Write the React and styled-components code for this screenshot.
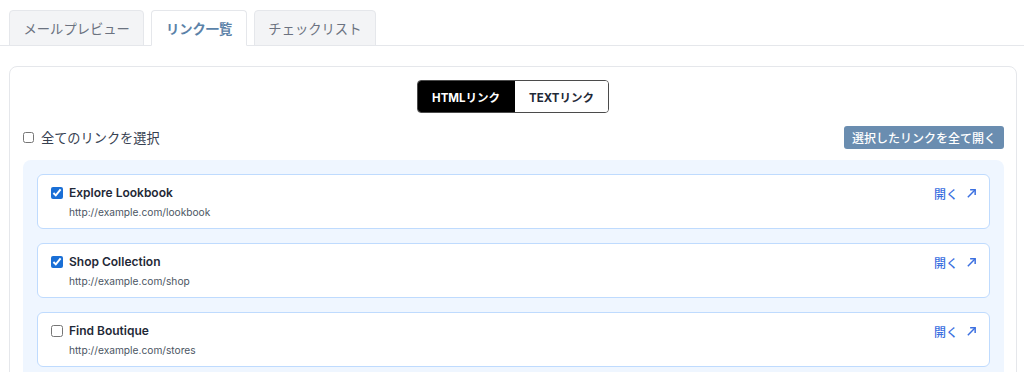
import { useState } from 'react';
import styled, { createGlobalStyle } from 'styled-components';

const GlobalStyle = createGlobalStyle`
	body {
		margin: 0;
		background: #ffffff;
		font-family: Inter, "Noto Sans CJK JP", sans-serif;
		color: #374151;
	}
`;

const Page = styled.div`
	padding: 10px 7px 0 8px;
`;

const TabBar = styled.div`
	display: flex;
	gap: 7px;
	border-bottom: 1px solid #e5e7eb;
	margin: 0 -7px 0 -8px;
	padding: 0 9px;
`;

const Tab = styled.button`
	height: 36px;
	padding: 0 13.5px;
	margin-bottom: -1px;
	font-family: inherit;
	font-size: 13.3px;
	font-weight: ${({ $active }) => ($active ? 700 : 400)};
	color: ${({ $active }) => ($active ? '#5b82a8' : '#6b7280')};
	background: ${({ $active }) => ($active ? '#ffffff' : '#f3f4f6')};
	border: 1px solid #e5e7eb;
	border-bottom-color: ${({ $active }) => ($active ? '#ffffff' : '#e5e7eb')};
	border-radius: 4px 4px 0 0;
	cursor: pointer;
`;

const Panel = styled.div`
	margin-top: 20px;
	margin-left: 1px;
	border: 1px solid #e5e7eb;
	border-radius: 8px;
	padding: 13px 12px 14px 13px;
`;

const ToggleRow = styled.div`
	display: flex;
	justify-content: center;
	padding-right: 1px;
`;

const Toggle = styled.div`
	display: flex;
	border: 1px solid #4b4b4b;
	border-radius: 4px;
	overflow: hidden;
	height: 31px;
`;

const ToggleButton = styled.button`
	border: none;
	padding: 0 14.5px;
	font-family: inherit;
	font-size: 11.5px;
	font-weight: 700;
	background: ${({ $active }) => ($active ? '#000000' : '#ffffff')};
	color: ${({ $active }) => ($active ? '#ffffff' : '#1f2937')};
	cursor: pointer;
`;

const SelectRow = styled.div`
	display: flex;
	align-items: center;
	justify-content: space-between;
	margin-top: 13px;
`;

const SelectAll = styled.label`
	display: flex;
	align-items: center;
	gap: 7px;
	font-size: 13.2px;
	color: #374151;

	input {
		margin: 0;
		width: 11px;
		height: 11px;
	}
`;

const OpenAllButton = styled.button`
	height: 23px;
	padding: 0 8px;
	border: none;
	border-radius: 3px;
	background: #6a8db0;
	color: #ffffff;
	font-family: inherit;
	font-size: 12px;
	font-weight: 500;
	cursor: pointer;
`;

const LinkList = styled.div`
	margin-top: 11px;
	background: #eff6ff;
	border-radius: 8px 8px 0 0;
	padding: 14px;
	display: flex;
	flex-direction: column;
	gap: 14px;
`;

const LinkCard = styled.div`
	display: flex;
	justify-content: space-between;
	background: #ffffff;
	border: 1px solid #bfdbfe;
	border-radius: 6px;
	padding: 9px 12px 11px 13px;
	height: 55px;
	box-sizing: border-box;
`;

const LinkInfo = styled.div`
	display: flex;
	flex-direction: column;
	gap: 2px;
`;

const LinkTitle = styled.label`
	display: flex;
	align-items: center;
	gap: 6px;
	font-size: 12px;
	font-weight: 600;
	color: #1f2937;
	line-height: 18px;

	input {
		margin: 0;
		width: 12px;
		height: 12px;
		accent-color: #1a6fd6;
	}
`;

const LinkUrl = styled.div`
	font-size: 10.2px;
	color: #4b5563;
	padding-left: 18px;
	line-height: 16px;
`;

const OpenLink = styled.a`
	display: flex;
	align-items: center;
	gap: 8px;
	height: 18px;
	font-size: 12px;
	color: #3b6fe0;
	text-decoration: none;
	font-weight: 500;

	svg {
		width: 11px;
		height: 11px;
	}
`;

const links = [
	{ id: 1, title: 'Explore Lookbook', url: 'http://example.com/lookbook', checked: true },
	{ id: 2, title: 'Shop Collection', url: 'http://example.com/shop', checked: true },
	{ id: 3, title: 'Find Boutique', url: 'http://example.com/stores', checked: false },
];

const ArrowIcon = () => (
	<svg viewBox="0 0 12 12" fill="none" stroke="currentColor" strokeWidth="1.6">
		<path d="M2 10 L10 2" />
		<path d="M4.5 2 H10 V7.5" />
	</svg>
);

export default function App() {
	const [mode, setMode] = useState('html');
	const [items, setItems] = useState(links);

	const toggle = (id) =>
		setItems((prev) => prev.map((l) => (l.id === id ? { ...l, checked: !l.checked } : l)));

	return (
		<Page>
			<GlobalStyle />
			<TabBar>
				<Tab>メールプレビュー</Tab>
				<Tab $active>リンク一覧</Tab>
				<Tab>チェックリスト</Tab>
			</TabBar>
			<Panel>
				<ToggleRow>
					<Toggle>
						<ToggleButton $active={mode === 'html'} onClick={() => setMode('html')}>
							HTMLリンク
						</ToggleButton>
						<ToggleButton $active={mode === 'text'} onClick={() => setMode('text')}>
							TEXTリンク
						</ToggleButton>
					</Toggle>
				</ToggleRow>
				<SelectRow>
					<SelectAll>
						<input type="checkbox" checked={items.every((l) => l.checked)} readOnly />
						全てのリンクを選択
					</SelectAll>
					<OpenAllButton>選択したリンクを全て開く</OpenAllButton>
				</SelectRow>
				<LinkList>
					{items.map(({ id, title, url, checked }) => (
						<LinkCard key={id}>
							<LinkInfo>
								<LinkTitle>
									<input type="checkbox" checked={checked} onChange={() => toggle(id)} />
									{title}
								</LinkTitle>
								<LinkUrl>{url}</LinkUrl>
							</LinkInfo>
							<OpenLink href="#">
								開く
								<ArrowIcon />
							</OpenLink>
						</LinkCard>
					))}
				</LinkList>
			</Panel>
		</Page>
	);
}
